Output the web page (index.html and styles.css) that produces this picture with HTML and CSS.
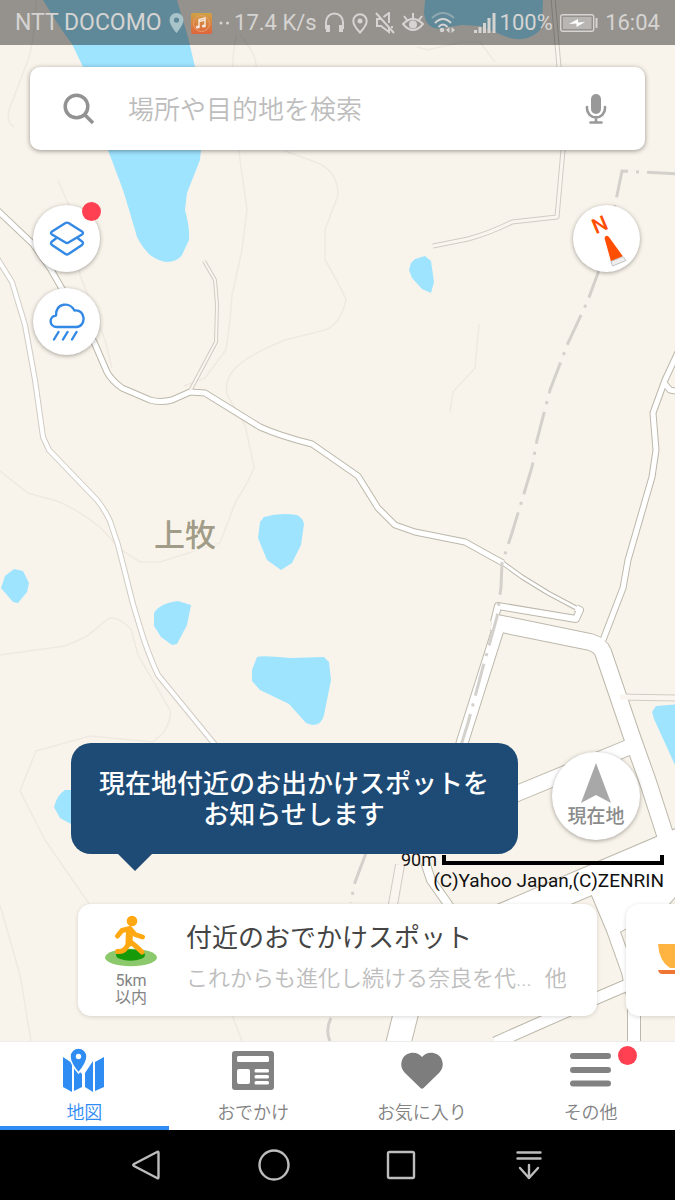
FILE: index.html
```html
<!DOCTYPE html>
<html lang="ja">
<head>
<meta charset="utf-8">
<meta name="viewport" content="width=device-width, initial-scale=1">
<title>地図</title>
<link rel="stylesheet" href="styles.css">
</head>
<body>
<div class="screen">
  <main class="map-area">
    <svg class="map" viewBox="0 0 675 1041" preserveAspectRatio="xMidYMid slice" role="img" aria-label="上牧周辺の地図">
      <defs>
        <path id="road-a" d="M-5 208L33 244L50 268L61 287L94 342L107 372Q112 381 122 388L150 400Q160 403 172 400L190 392L205 393L260 427Q280 436 312 444L335 460L358 476L378 508L395 525L415 532L465 542L503 563"/>
        <path id="road-a2" d="M500 561L522 577L548 593L578 609"/>
        <path id="road-a3" d="M576 608L580 610L576 619L498 606L494 622"/>
        <path id="road-b" d="M-3 258L12 282L25 325L35 380L43 437L49 450L97 500Q105 510 110 521L118 545L133 604L143 637Q150 658 158 675L185 708L225 757"/>
        <path id="road-c" d="M204 261L215 280L217 305L216 342L190 391"/>
        <path id="road-d" d="M553 -2L559 67L563 150L557 217L512 222Q490 233 468 239L433 246"/>
        <path id="road-e" d="M679 350L665 380L653 413L656 450L652 477L628 560L623 588L603 640"/>
        <path id="road-e2" d="M664 383L670 390L680 392"/>
        <path id="road-f" d="M492 622L590 642Q600 645 603 652L632 737L648 782L670 850"/>
        <path id="road-g" d="M501 620L463 740L450 785"/>
        <path id="road-h" d="M440 827L518 793L632 746"/>
        <path id="road-i" d="M690 838L420 953"/>
        <path id="road-j" d="M592 880L613 930L628 972L634 1000L634 1045"/>
        <path id="road-k" d="M632 983L597 998L540 1023L495 1043"/>
        <path id="road-l" d="M398 1045L408 1005L440 940"/>
        <path id="road-m" d="M425 862L431 880L452 910"/>
        <path id="road-n" d="M400 865L392 910"/>
        <path id="road-o" d="M620 697L680 698"/>
        <path id="plaza" d="M592 893L655 848L672 850L690 880L668 905L618 933Z"/>
      </defs>
      <rect class="land" x="-500" y="-500" width="1675" height="2041"/>
      <g class="water">
        <path d="M43 0Q61 30 72 44L83 67L108 150L123 190L130 213L137 237Q142 247 150 255Q160 262 167 262Q177 262 182 255L189 240Q190 228 185 210L187 193L200 160L201 150L195 67L188 37L177 0Z"/>
        <path d="M425 0L424 13Q425 24 432 27Q436 30 442 28L462 25L480 26L502 35Q512 40 522 39Q536 37 542 27L543 0Z"/>
        <path d="M415 259L425 256L431 261L434 282L431 293L422 289L412 278L409 270L411 263Z"/>
        <path d="M264 517Q280 512 297 515Q303 518 304 524L301 545L292 563L281 570L267 560L258 538L260 522Z"/>
        <path d="M5 576L14 569L23 571L29 583L27 592L18 603L13 602L1 588Z"/>
        <path d="M154 613Q160 603 178 601L191 605L187 625L177 644L172 645L161 637L154 626Z"/>
        <path d="M257 657Q262 655 290 658L324 657L329 662L331 680L324 715Q322 725 312 725L306 723L289 704L260 690L252 681V670Z"/>
        <path d="M80 790H65Q57 795 54 807L60 818L80 829Z"/>
        <path d="M680 704L656 706L652 712L654 719L680 776Z"/>
      </g>
      <g class="trail">
        <path d="M36 0Q35 38 28 60L9 110Q6 122 14 127M236 35Q228 80 238 145L247 210L242 250L232 295L230 320L226 350L205 378L184 386"/>
        <path d="M240 35Q258 55 256 70M285 151L315 162Q338 170 338 195L325 230V260Q340 285 346 300Q340 325 325 330L285 340Q240 358 230 375Q223 390 230 400L245 425L254 467Q250 480 236 501L220 543L160 562H140L120 549L100 527Q75 508 57 501L28 493L0 471"/>
        <path d="M58 180L72 213L80 275L105 340L112 368M0 655L65 646Q75 642 87 636L108 619Q117 615 131 629L138 655L170 710Q172 718 164 732L153 742L90 736L36 751L20 791L45 840L92 908L135 970L232 1015L242 1041"/>
        <path d="M417 47L427 50L462 42H480L495 62M479 324L475 368L453 392L450 412M0 905L20 975L31 1041"/>
      </g>
      <g class="casing">
        <use href="#road-a" class="w7"/><use href="#road-b" class="w6 pale"/><use href="#road-c" class="w4 pale"/><use href="#road-d" class="w5 pale"/>
        <use href="#road-a2" class="w5"/><use href="#road-e" class="w7"/><use href="#road-e2" class="w7"/><use href="#road-a3" class="w8"/>
        <use href="#road-f" class="w18"/><use href="#road-g" class="w13"/><use href="#road-h" class="w17"/><use href="#road-i" class="w30"/>
        <use href="#road-j" class="w14"/><use href="#road-k" class="w13"/><use href="#road-l" class="w26"/><use href="#road-m" class="w10"/>
        <use href="#road-n" class="w10 pale"/><use href="#road-o" class="w7 pale"/><use href="#plaza" class="w2"/>
      </g>
      <g class="surface">
        <use href="#road-a" class="w5"/><use href="#road-b" class="w4"/><use href="#road-c" class="w2 faint"/><use href="#road-d" class="w3 faint"/>
        <use href="#road-a2" class="w3"/><use href="#road-e" class="w5"/><use href="#road-e2" class="w5"/><use href="#road-a3" class="w6"/>
        <use href="#road-f" class="w16"/><use href="#road-g" class="w11"/><use href="#road-h" class="w15"/><use href="#road-i" class="w28"/>
        <use href="#road-j" class="w12"/><use href="#road-k" class="w11"/><use href="#road-l" class="w24"/><use href="#road-m" class="w8"/>
        <use href="#road-n" class="w8 faint"/><use href="#road-o" class="w5 faint"/><use href="#plaza" class="plaza"/>
      </g>
      <g class="boundary">
        <path d="M680 174L622 171L615 205L598 273L588 300L568 343L550 390L537 440L532 467L512 533L502 563L501 587L497 617L483 667L468 723L458 755M366 853L354 885L351 903M331 1018Q325 1030 330 1041"/>
      </g>
      <text class="place-name" x="185" y="546" text-anchor="middle">上牧</text>
    </svg>

    <header class="status-bar">
      <span class="carrier">NTT DOCOMO</span>
      <svg width="15" height="20" viewBox="0 0 15 20"><path fill="#a9c3cb" fill-rule="evenodd" d="M7.500 0A7 7 0 0 0 .500 7C.500 12 7.500 20 7.500 20S14.500 12 14.500 7A7 7 0 0 0 7.500 0ZM7.500 4.500a2.600 2.600 0 1 1 0 5.200a2.600 2.600 0 0 1 0-5.200Z"/></svg>
      <svg width="21" height="21" viewBox="0 0 21 21"><defs><linearGradient id="music" x2="0" y2="1"><stop stop-color="#cfa343"/><stop offset="1" stop-color="#e0633c"/></linearGradient></defs><rect width="21" height="21" rx="2" fill="url(#music)"/><circle cx="10.500" cy="10.500" r="8" fill="none" stroke="#e8a070"/><path d="M8 14V6.500L14 5V13M8 8.500L14 7" fill="none" stroke="#f5e6dc" stroke-width="1.500"/><ellipse cx="6.800" cy="14" rx="2" ry="1.600" fill="#f5e6dc"/><ellipse cx="12.800" cy="13" rx="2" ry="1.600" fill="#f5e6dc"/></svg>
      <span class="speed"><svg width="11" height="4" viewBox="0 0 11 4"><circle cx="2" cy="2" r="1.500" fill="#d5d4d2"/><circle cx="8.500" cy="2" r="1.500" fill="#d5d4d2"/></svg>17.4 K/s</span>
      <svg class="line" width="21" height="22" viewBox="0 0 21 22"><path d="M2 17V10a8.500 8.500 0 0 1 17 0V17"/><path stroke-width="4" d="M4 13V20M17 13V20"/></svg>
      <svg class="line" width="16" height="21" viewBox="0 0 16 21"><path d="M8 1.200A6.700 6.700 0 0 0 1.300 8C1.300 12.500 8 19.500 8 19.500S14.700 12.500 14.700 8A6.700 6.700 0 0 0 8 1.200Z"/><circle cx="8" cy="8" r="1.500" fill="#d5d4d2"/></svg>
      <svg class="line" width="20" height="22" viewBox="0 0 20 22"><path d="M1 1L19 21M6 7H2V14H6L14 20V15M8.500 5L14 1V11M17 14V16"/></svg>
      <svg class="line" width="22" height="22" viewBox="0 0 22 22"><path d="M1 12Q11 2 21 12Q11 24 1 12ZM2 4L5 8M11 1V6M20 4L17 8"/><circle cx="11" cy="12.500" r="3" fill="#d5d4d2"/></svg>
      <svg class="line" width="24" height="22" viewBox="0 0 24 22"><path stroke-opacity=".4" d="M1 6Q12-4 23 6"/><path d="M4 11Q12 3 20 11M7.500 15Q12 10 16.500 15"/><circle cx="11" cy="18" r="1.200" fill="#d5d4d2"/><path fill="#d5d4d2" stroke="none" d="M18.500 15V21L15 18ZM20.500 15V21L24 18Z"/></svg>
      <span class="level"><svg width="33" height="20" viewBox="0 0 33 20"><path fill="#d5d4d2" d="M11 17h3v3h-3ZM15.500 14h3v6h-3ZM20 10h3v10h-3ZM24.500 5h3v15h-3ZM29.500 0h3v20h-3Z"/></svg>100%</span>
      <svg width="38" height="18" viewBox="0 0 38 18"><rect x=".700" y=".700" width="33" height="16.600" rx="2" fill="none" stroke="#d5d4d2" stroke-width="1.400"/><rect x="3" y="3" width="28.500" height="12" fill="#b8b6b2"/><path fill="#fff" d="M9 10L18 5V8.500L25 8L16.500 13V9.500Z"/><path fill="#d5d4d2" d="M35.500 4H37.500V14H35.500Z"/></svg>
      <time>16:04</time>
    </header>

    <form class="search" role="search">
      <button type="submit" class="plain" aria-label="検索">
        <svg width="32" height="32" viewBox="0 0 32 32" fill="none" stroke="#929292" stroke-width="3.500"><circle cx="13.500" cy="13.500" r="11.300"/><path d="M21.500 21.500L30 30"/></svg>
      </button>
      <input type="text" placeholder="場所や目的地を検索" aria-label="場所や目的地を検索">
      <button type="button" class="plain" aria-label="音声検索">
        <svg width="22" height="32" viewBox="0 0 22 32"><rect x="6" y="1" width="10" height="20" rx="5" fill="#999"/><path d="M2 14V15.500A9 9 0 0 0 20 15.500V14M11 24V29M5.500 29.500H16.500" fill="none" stroke="#999" stroke-width="2.600" stroke-linecap="round"/></svg>
      </button>
    </form>

    <div class="controls">
      <div class="control-stack">
        <button type="button" class="round" aria-label="地図の種類">
          <svg width="36" height="36" viewBox="0 0 36 36" fill="none" stroke="#3489e4" stroke-width="2.400" stroke-linejoin="round"><path d="M16.500 2Q18 1.200 19.500 2L33 10.500Q35 12 33 13.500L19.500 21.500Q18 22.500 16.500 21.500L3 13.500Q1 12 3 10.500Z"/><path d="M7.500 17L3 20.500Q1 22 3 24L16.500 33Q18 34 19.500 33L33 24Q35 22 33 20.500L28.500 17"/></svg>
          <span class="dot"></span>
        </button>
        <button type="button" class="round" aria-label="雨雲レーダー">
          <svg width="36" height="38" viewBox="0 0 36 38" fill="none" stroke="#3489e4" stroke-width="2.400" stroke-linecap="round" stroke-linejoin="round"><path d="M7.500 24C-.500 23.500 0 13 7 12.500C7 -1 21 -1 25.500 7.500C37 6 37.500 23.500 27.500 24Z"/><path d="M9.500 29L5 36.500M18.500 29L14 36.500M27.500 29L23 36.500"/></svg>
        </button>
      </div>
      <button type="button" class="round" aria-label="北を上にする">
        <svg width="66" height="66" viewBox="0 0 66 66"><text class="north" x="26" y="26" text-anchor="middle" transform="rotate(-23 26 19)">N</text><path fill="#ff4e00" d="M30.500 32Q32 28 35 31L49 50.500L37 55.500Z"/><path fill="#eee" stroke="#c2c2c2" d="M37 55.500L49 50.500L52 54.500L38.500 60Z"/></svg>
      </button>
    </div>

    <div class="bottom">
      <div class="notice-row">
        <p class="bubble">現在地付近のお出かけスポットを<br>お知らせします</p>
        <button type="button" class="round locate">
          <svg width="30" height="40" viewBox="0 0 30 40"><path fill="#a8a8a8" d="M15 0L30 40L15 32L0 40Z"/></svg>
          <span>現在地</span>
        </button>
      </div>
      <div class="scale"><span>90m</span><span class="scale-bar"></span></div>
      <p class="copyright">(C)Yahoo Japan,(C)ZENRIN</p>
      <div class="cards">
        <a class="card" href="#spots">
          <span class="badge">
            <svg width="54" height="52" viewBox="0 0 54 52"><ellipse cx="27" cy="42.500" rx="26" ry="8.700" fill="#8cc96c"/><ellipse cx="26.500" cy="40" rx="14.500" ry="5.800" fill="#169a0a"/><g fill="none" stroke="#ffa812" stroke-width="5" stroke-linecap="round" stroke-linejoin="round"><path d="M13.500 21L18 15.500L26 13.500L31 19.500L38.500 22"/><path stroke-width="7" d="M25.500 16L25 28"/><path d="M25 28L22 33Q19 37 13.500 36.500"/><path d="M25.500 26Q33 32 38 37"/></g><circle cx="28" cy="6" r="5.300" fill="#ffa812"/></svg>
            <span class="badge-text"><span>5km</span><span>以内</span></span>
          </span>
          <span class="card-text">
            <strong>付近のおでかけスポット</strong>
            <span class="card-sub"><span>これからも進化し続ける奈良を代...</span><span>他</span></span>
          </span>
        </a>
        <a class="card next" href="#cafe" aria-label="カフェ">
          <svg width="54" height="32" viewBox="0 0 54 32"><path fill="#ffb340" d="M0 0H42Q42 17 30 24H12Q1 17 0 0Z"/><path fill="#f07634" d="M0 26H42Q41 30 38 30H4Q1 30 0 26Z"/></svg>
        </a>
      </div>
    </div>
  </main>

  <nav class="tabs" aria-label="メイン">
    <a class="tab active" href="#map" aria-current="page">
      <svg width="42" height="44" viewBox="0 0 42 44"><path fill="#2f8cf3" d="M0 9L9 15V44L0 39ZM11 18L19 26V39L11 43ZM22 25L30 13V44L22 39ZM32 14L41 9V39L32 43Z"/><path fill="#2f8cf3" stroke="#fff" stroke-width="1.500" d="M15.500 0A8.500 8.500 0 0 0 7 8.500C7 15 15.500 25 15.500 25S24 15 24 8.500A8.500 8.500 0 0 0 15.500 0Z"/><circle cx="15.500" cy="8.500" r="2.700" fill="#fff"/></svg>
      <span>地図</span>
    </a>
    <a class="tab" href="#outing">
      <svg width="42" height="44" viewBox="0 0 42 44"><rect y="3" width="42" height="39" rx="3" fill="#828282"/><g fill="#fff"><rect x="5" y="8" width="32" height="6" rx="1.500"/><rect x="5" y="21" width="13" height="15" rx="2"/><rect x="22.500" y="21" width="14.500" height="3.400" rx="1.500"/><rect x="22.500" y="27" width="14.500" height="3.400" rx="1.500"/><rect x="22.500" y="33" width="14.500" height="3.400" rx="1.500"/></g></svg>
      <span>おでかけ</span>
    </a>
    <a class="tab" href="#favorites">
      <svg width="42" height="44" viewBox="0 0 42 44"><path fill="#7d7d7d" d="M21 9C16 2.500 5 3.500 1.500 11C-1 17 .500 21 4 25L19.500 40Q21 41.500 22.500 40L38 25C41.500 21 43 17 40.500 11C37 3.500 26 2.500 21 9Z"/></svg>
      <span>お気に入り</span>
    </a>
    <a class="tab" href="#more">
      <svg width="42" height="44" viewBox="0 0 42 44"><path stroke="#828282" stroke-width="6" stroke-linecap="round" d="M3 8H38M3 22H38M3 35.500H38"/></svg>
      <span>その他</span>
      <i class="dot"></i>
    </a>
  </nav>

  <footer class="system-bar">
    <div class="system-keys">
      <button type="button" class="plain" aria-label="戻る"><svg width="32" height="32" viewBox="0 0 32 32"><path d="M27 3Q28.500 2 28.500 4V28Q28.500 30 27 29L4 17Q2.500 16 4 15Z"/></svg></button>
      <button type="button" class="plain" aria-label="ホーム"><svg width="32" height="32" viewBox="0 0 32 32"><circle cx="16" cy="16" r="14.500"/></svg></button>
      <button type="button" class="plain" aria-label="履歴"><svg width="32" height="32" viewBox="0 0 32 32"><rect x="3" y="3" width="26" height="26" rx="1.500"/></svg></button>
      <button type="button" class="plain" aria-label="通知パネル"><svg width="32" height="32" viewBox="0 0 32 32"><path d="M4.500 3.500H27.500M4.500 9.500H27.500M16 16V29M7 19L16 29L25 19"/></svg></button>
    </div>
  </footer>
</div>
</body>
</html>
```

FILE: styles.css
```css
* { box-sizing: border-box; }

body {
  margin: 0;
  font-family: Roboto, "Noto Sans CJK JP", sans-serif;
  color: #444;
}

p { margin: 0; }
svg { flex: none; display: block; }
a { color: inherit; text-decoration: none; }
button { font: inherit; padding: 0; border: 0; cursor: pointer; }

.plain {
  display: flex;
  align-items: center;
  justify-content: center;
  background: none;
}

.screen {
  display: flex;
  flex-direction: column;
  min-height: 100vh;
}

.map-area {
  position: relative;
  z-index: 0;
  flex: 1;
  display: flex;
  flex-direction: column;
  overflow: hidden;
}

/* Map drawing */
.map {
  position: absolute;
  inset: 0;
  z-index: -1;
  width: 100%;
  height: 100%;
}
.land { fill: #f9f4eb; }
.water { fill: #9ee4ff; }
.trail { fill: none; stroke: #efe9e1; stroke-width: 1.5; }
.casing { fill: none; stroke: #bcb8ab; stroke-linejoin: round; }
.casing .pale { stroke: #d0ccc4; }
.surface { fill: none; stroke: #fff; stroke-linejoin: round; }
.surface .faint { stroke: #faf6ef; }
.surface .plaza { fill: #fff; stroke: none; }
.boundary {
  fill: none;
  stroke: #d4d1cd;
  stroke-width: 3;
  stroke-dasharray: 33 8 3 8;
}
.w2 { stroke-width: 2px; }
.w3 { stroke-width: 3px; }
.w4 { stroke-width: 4px; }
.w5 { stroke-width: 5px; }
.w6 { stroke-width: 6px; }
.w7 { stroke-width: 7px; }
.w8 { stroke-width: 8px; }
.w10 { stroke-width: 10px; }
.w11 { stroke-width: 11px; }
.w12 { stroke-width: 12px; }
.w13 { stroke-width: 13px; }
.w14 { stroke-width: 14px; }
.w15 { stroke-width: 15px; }
.w16 { stroke-width: 16px; }
.w17 { stroke-width: 17px; }
.w18 { stroke-width: 18px; }
.w24 { stroke-width: 24px; }
.w26 { stroke-width: 26px; }
.w28 { stroke-width: 28px; }
.w30 { stroke-width: 30px; }
.place-name {
  font-size: 31px;
  font-weight: 500;
  fill: #a19c87;
  stroke: #f9f4eb;
  stroke-width: 4px;
  paint-order: stroke;
}

/* Status bar */
.status-bar {
  display: flex;
  align-items: center;
  justify-content: space-between;
  height: 45px;
  padding: 1px 15px 0;
  background: rgba(0, 0, 0, .4);
  color: #d5d4d2;
  font-size: 22px;
  line-height: 28px;
  white-space: nowrap;
}
.carrier { font-size: 23px; }
.status-bar .line { fill: none; stroke: #d5d4d2; stroke-width: 2; }
.speed, .level {
  display: flex;
  align-items: center;
  gap: 4px;
}

/* Search */
.search {
  display: flex;
  align-items: center;
  gap: 33px;
  height: 83px;
  margin: 22px 30px 0;
  padding: 0 38px 0 33px;
  border-radius: 10px;
  background: #fff;
  box-shadow: 0 1px 5px rgba(0, 0, 0, .4);
}
.search input {
  flex: 1;
  min-width: 0;
  padding: 2px 0 0;
  border: 0;
  outline: 0;
  background: none;
  font: 26px/38px Roboto, "Noto Sans CJK JP", sans-serif;
  font-weight: 350;
  color: #444;
}
.search input::placeholder { color: #bdbdbd; opacity: 1; }

/* Round map controls */
.controls {
  display: flex;
  justify-content: space-between;
  align-items: flex-start;
  padding: 55px 35px 0 33px;
}
.control-stack {
  display: flex;
  flex-direction: column;
  gap: 16px;
}
.round {
  position: relative;
  display: flex;
  flex-direction: column;
  align-items: center;
  justify-content: center;
  width: 67px;
  height: 67px;
  border-radius: 50%;
  background: #fff;
  box-shadow: 0 1px 4px rgba(0, 0, 0, .35);
}
.dot {
  position: absolute;
  top: -3px;
  right: -1px;
  width: 19px;
  height: 19px;
  border-radius: 50%;
  background: #ff4052;
}
.north { font-size: 21px; font-weight: 500; fill: #ff4e00; }

/* Bottom overlay */
.bottom {
  margin-top: auto;
  padding-bottom: 25px;
}
.notice-row {
  position: relative;
  z-index: 1;
  display: flex;
  justify-content: space-between;
  align-items: flex-start;
  padding: 0 35px 0 71px;
}
.bubble {
  position: relative;
  padding: 26px 29px 23px 28px;
  border-radius: 20px;
  background: #1d4b75;
  color: #fff;
  font-size: 26px;
  font-weight: 500;
  line-height: 31px;
  text-align: center;
}
.bubble::after {
  content: "";
  position: absolute;
  top: 100%;
  left: 47px;
  border: 17px solid transparent;
  border-top-color: #1d4b75;
  border-bottom: 0;
}
.locate {
  width: 88px;
  height: 88px;
  margin-top: 9px;
  gap: 2px;
  color: #8c8c8c;
  font-size: 19px;
  font-weight: 500;
  line-height: 24px;
}
.scale {
  display: flex;
  align-items: center;
  justify-content: flex-end;
  gap: 5px;
  padding-right: 11px;
  margin-top: -4px;
  color: #111;
  font-size: 18px;
  line-height: 20px;
}
.scale-bar {
  width: 222px;
  height: 10px;
  border: 4px solid #000;
  border-top: 0;
}
.copyright {
  padding-right: 11px;
  color: #111;
  font-size: 19px;
  line-height: 22px;
  text-align: right;
}
.cards {
  display: flex;
  gap: 29px;
  margin-top: 12px;
  padding-left: 78px;
}
.card {
  flex: none;
  display: flex;
  align-items: center;
  gap: 28px;
  width: 519px;
  max-width: calc(100% - 49px);
  height: 112px;
  padding: 0 26px;
  border-radius: 13px;
  background: #fff;
  box-shadow: 0 1px 4px rgba(0, 0, 0, .15);
}
.card.next { padding-left: 32px; }
.badge {
  display: flex;
  flex-direction: column;
  align-items: center;
  gap: 5px;
}
.badge-text {
  display: flex;
  flex-direction: column;
  align-items: center;
  color: #848484;
  font-size: 16px;
  line-height: 17px;
}
.card-text {
  display: flex;
  flex-direction: column;
  gap: 6px;
  min-width: 0;
  padding-bottom: 6px;
  white-space: nowrap;
}
.card-text strong {
  font-size: 26px;
  font-weight: 400;
  line-height: 38px;
}
.card-sub {
  display: flex;
  gap: 13px;
  color: #bdbdbd;
  font-size: 22px;
  font-weight: 350;
  line-height: 32px;
}

/* App tabs */
.tabs {
  display: flex;
  height: 89px;
  border-top: 1px solid #ececec;
  background: #fff;
}
.tab {
  position: relative;
  flex: 1;
  display: flex;
  flex-direction: column;
  align-items: center;
  gap: 8px;
  padding-top: 6px;
  border-bottom: 4px solid transparent;
  color: #828282;
  font-size: 18px;
  font-weight: 350;
  line-height: 26px;
}
.tab.active { color: #2f8cf3; border-color: #2f8cf3; }
.tab .dot {
  top: 4px;
  right: auto;
  left: calc(50% + 27px);
}

/* System keys */
.system-bar { height: 70px; background: #000; }
.system-keys {
  display: flex;
  max-width: 510px;
  height: 100%;
  margin: 0 auto;
}
.system-keys button { flex: 1; }
.system-keys svg {
  fill: none;
  stroke: #bdbdbd;
  stroke-width: 2.4;
  stroke-linecap: round;
  stroke-linejoin: round;
}
```
